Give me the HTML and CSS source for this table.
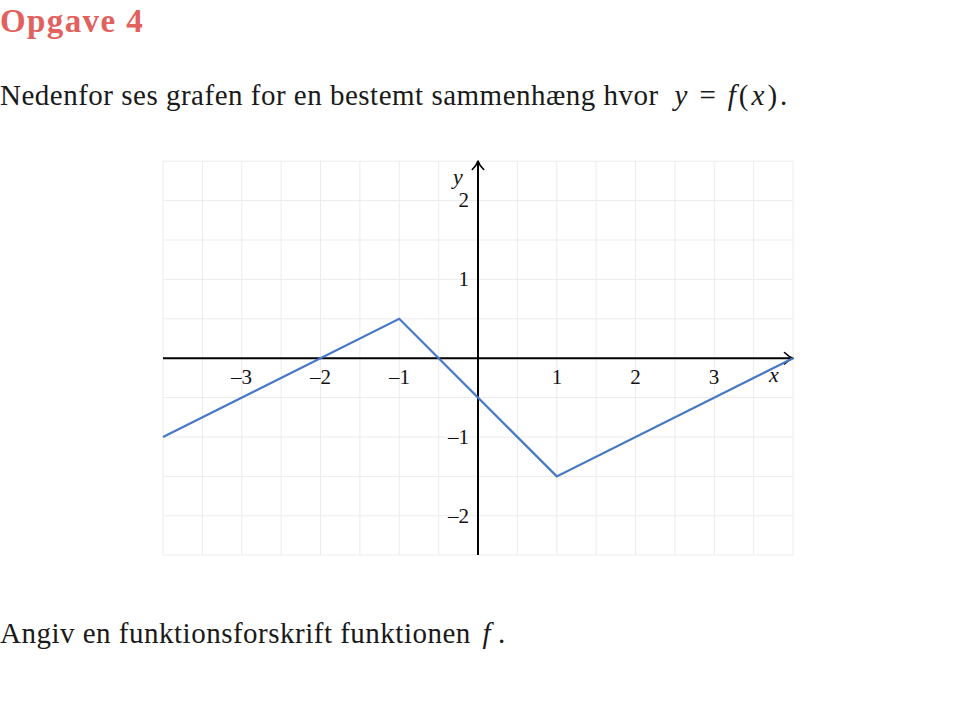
FILE: index.html
```html
<!DOCTYPE html>
<html lang="da">
<head>
<meta charset="utf-8">
<title>Opgave 4</title>
<link rel="stylesheet" href="styles.css">
</head>
<body>
<h1 class="title">Opgave 4</h1>
<p class="text">Nedenfor ses grafen for en bestemt sammenhæng hvor <span class="math"><i>y</i><span class="op">=</span><i>f</i>(<i>x</i>).</span></p>
<div class="figure">
<svg class="graph" width="660" height="414" viewBox="147 150 660 414" xmlns="http://www.w3.org/2000/svg">
  <g class="grid">
    <line x1="162" y1="160" x2="162" y2="554"/>
    <line x1="201.375" y1="160" x2="201.375" y2="554"/>
    <line x1="240.75" y1="160" x2="240.75" y2="554"/>
    <line x1="280.125" y1="160" x2="280.125" y2="554"/>
    <line x1="319.5" y1="160" x2="319.5" y2="554"/>
    <line x1="358.875" y1="160" x2="358.875" y2="554"/>
    <line x1="398.25" y1="160" x2="398.25" y2="554"/>
    <line x1="437.625" y1="160" x2="437.625" y2="554"/>
    <line x1="516.375" y1="160" x2="516.375" y2="554"/>
    <line x1="555.75" y1="160" x2="555.75" y2="554"/>
    <line x1="595.125" y1="160" x2="595.125" y2="554"/>
    <line x1="634.5" y1="160" x2="634.5" y2="554"/>
    <line x1="673.875" y1="160" x2="673.875" y2="554"/>
    <line x1="713.25" y1="160" x2="713.25" y2="554"/>
    <line x1="752.625" y1="160" x2="752.625" y2="554"/>
    <line x1="792" y1="160" x2="792" y2="554"/>
    <line x1="162" y1="160.2" x2="792" y2="160.2"/>
    <line x1="162" y1="199.6" x2="792" y2="199.6"/>
    <line x1="162" y1="239" x2="792" y2="239"/>
    <line x1="162" y1="278.4" x2="792" y2="278.4"/>
    <line x1="162" y1="317.8" x2="792" y2="317.8"/>
    <line x1="162" y1="396.6" x2="792" y2="396.6"/>
    <line x1="162" y1="436" x2="792" y2="436"/>
    <line x1="162" y1="475.4" x2="792" y2="475.4"/>
    <line x1="162" y1="514.8" x2="792" y2="514.8"/>
    <line x1="162" y1="554" x2="792" y2="554"/>
  </g>
  <g class="axes">
    <line x1="162" y1="357.2" x2="790" y2="357.2"/>
    <line x1="477" y1="554" x2="477" y2="162"/>
  </g>
  <path class="arrow" d="M783.5 351.5 Q788 356 792 357.2 Q788 358.4 783.5 363"/>
  <path class="arrow" d="M471.3 168.5 Q475.8 164 477 160 Q478.2 164 482.7 168.5"/>
  <polyline class="curve" points="162,436 398.25,317.8 555.75,475.4 792,357.2"/>
  <g class="ticks">
    <text x="240.5" y="383">–3</text>
    <text x="319.5" y="383">–2</text>
    <text x="398.5" y="383">–1</text>
    <text x="556" y="383">1</text>
    <text x="634.5" y="383">2</text>
    <text x="713" y="383">3</text>
  </g>
  <g class="ticks right">
    <text x="468" y="206">2</text>
    <text x="468" y="285">1</text>
    <text x="468" y="443">–1</text>
    <text x="468" y="522">–2</text>
  </g>
  <text class="var" x="452" y="183">y</text>
  <text class="var" x="768" y="381">x</text>
</svg>
</div>
<p class="text question">Angiv en funktionsforskrift funktionen <span class="math"><i>f</i> .</span></p>
</body>
</html>
```
FILE: styles.css
```css
html, body {
  margin: 0;
  padding: 0;
  background: #ffffff;
}
body {
  font-family: "Liberation Serif", "DejaVu Serif", serif;
  color: #1a1a1a;
}
.title {
  margin: 0;
  padding-top: 3px;
  font-size: 33px;
  line-height: 36px;
  letter-spacing: 1.4px;
  font-weight: bold;
  color: #e2605d;
}
.text {
  margin: 0;
  font-size: 29px;
  line-height: 32px;
  letter-spacing: 0.5px;
}
.title + .text {
  margin-top: 40px;
}
.math {
  letter-spacing: 3px;
}
.title + .text .math {
  margin-left: 8px;
}
.math i {
  font-style: italic;
}
.op {
  padding: 0 9px;
}
.figure {
  display: flex;
  justify-content: center;
  margin-top: 40px;
}
.graph {
  display: block;
}
.grid line {
  stroke: #ececec;
  stroke-width: 1;
}
.axes line {
  stroke: #000;
  stroke-width: 2;
}
.arrow {
  fill: none;
  stroke: #000;
  stroke-width: 1.6;
  stroke-linecap: round;
  stroke-linejoin: round;
}
.curve {
  fill: none;
  stroke: #4778c5;
  stroke-width: 2.2;
  stroke-linejoin: miter;
}
.ticks text {
  font-family: "Liberation Serif", "DejaVu Serif", serif;
  font-size: 21px;
  fill: #111;
  text-anchor: middle;
}
.ticks.right text {
  text-anchor: end;
}
.var {
  font-family: "Liberation Serif", "DejaVu Serif", serif;
  font-style: italic;
  font-size: 22px;
  fill: #111;
}
.question {
  margin-top: 52px;
}
.question .math {
  letter-spacing: 0;
  margin-left: 4px;
}
```
